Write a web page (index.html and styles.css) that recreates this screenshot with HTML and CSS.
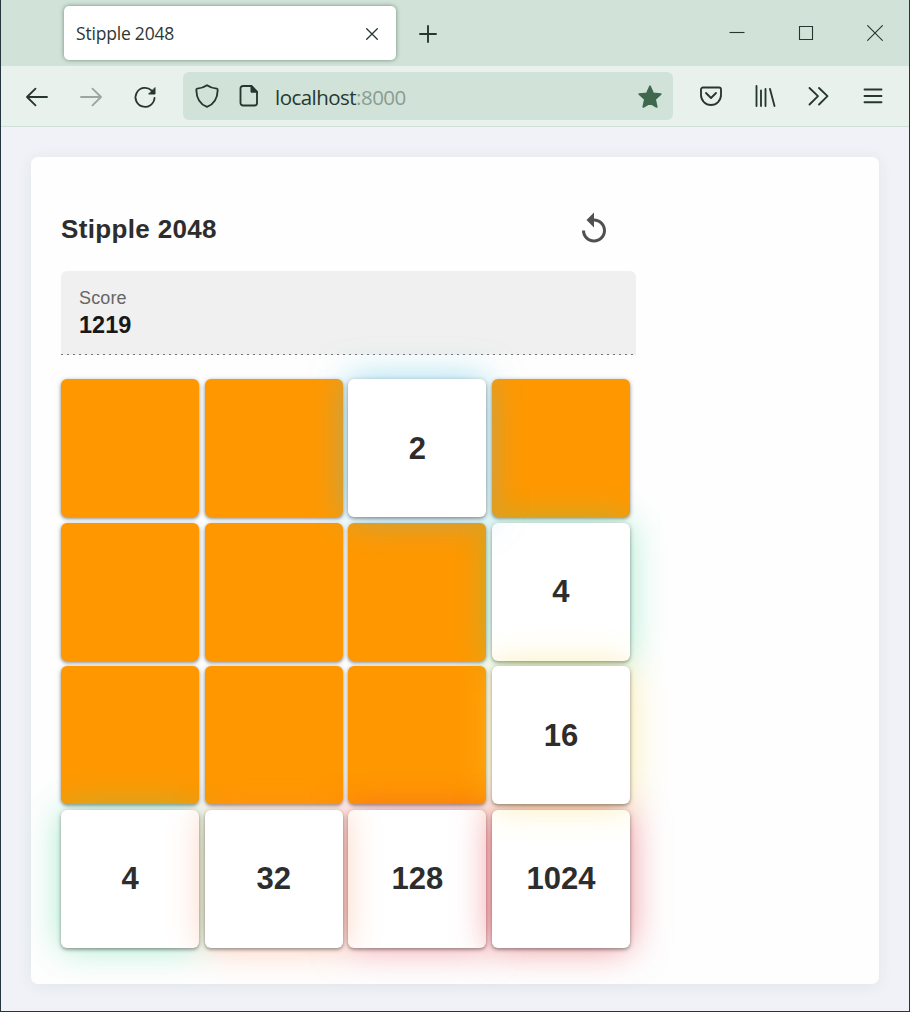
FILE: index.html
```html
<!DOCTYPE html>
<html lang="en">
<head>
<meta charset="utf-8">
<title>Stipple 2048</title>
<link rel="stylesheet" href="styles.css">
</head>
<body>
<div class="window">
  <header class="tabbar">
    <div class="tab">
      <span class="tab-title">Stipple 2048</span>
      <svg class="tab-close" width="12" height="12" viewBox="0 0 12 12"><path d="M.7.7l10.6 10.6M11.3.7L.7 11.3"/></svg>
    </div>
    <svg class="new-tab" width="18" height="18" viewBox="0 0 18 18"><path d="M9 .3v17.4M.3 9h17.4"/></svg>
    <div class="window-controls">
      <svg width="16" height="16" viewBox="0 0 16 16"><path d="M.5 7.5h15"/></svg>
      <svg width="16" height="16" viewBox="0 0 16 16"><path d="M1.5 1.5h13v13h-13z"/></svg>
      <svg width="16" height="16" viewBox="0 0 16 16"><path d="M.3.3l15.4 15.4M15.7.3L.3 15.7"/></svg>
    </div>
  </header>
  <nav class="toolbar">
    <div class="nav-buttons">
      <svg width="24" height="24" viewBox="0 0 24 24"><path d="M22 12H2M10.500 3.700L2 12l8.500 8.300"/></svg>
      <svg class="disabled" width="24" height="24" viewBox="0 0 24 24"><path d="M2 12H22M13.500 3.700L22 12l-8.500 8.300"/></svg>
      <svg width="24" height="24" viewBox="0 0 24 24"><path d="M21.500 13a9.500 9.500 0 1 1-3-7.600L20 7"/><path class="solid" d="M22 3v6h-6z"/></svg>
    </div>
    <div class="urlbar">
      <svg width="24" height="24" viewBox="0 0 24 24"><path d="M12 1.200C9.500 3 6 4.200 2.200 4.700c-.7.100-.9.500-.9 1.200C1.500 14 4.500 20 12 22.800 19.500 20 22.500 14 22.700 5.900c0-.7-.2-1.100-.9-1.200C18 4.200 14.500 3 12 1.200z"/></svg>
      <svg class="page-icon" width="20" height="24" viewBox="0 0 20 24"><path d="M12.500 2H4a2.500 2.500 0 0 0-2.500 2.500v14.500A2.500 2.500 0 0 0 4 21.500h11.500A2.500 2.500 0 0 0 18 19V7.700z"/><path class="solid" d="M12 2v6.200h6z"/></svg>
      <span class="url">localhost<span class="port">:8000</span></span>
      <svg class="star" width="24" height="24" viewBox="0 0 24 24"><path d="M12 1.300l3.100 7 7.600.8-5.700 5.100 1.700 7.700L12 18l-6.700 3.900L7 14.200 1.300 9.100l7.600-.8z"/></svg>
    </div>
    <div class="actions">
      <svg width="24" height="24" viewBox="0 0 24 24"><path d="M4 3.500h16a2 2 0 0 1 2 2V11a10 10 0 0 1-20 0V5.500a2 2 0 0 1 2-2z"/><path d="M7 9l5 5 5-5"/></svg>
      <svg width="24" height="24" viewBox="0 0 24 24"><path d="M3.500 2V22M8 6.500v15.500M12.500 5V22M17 5l4.500 17"/></svg>
      <svg width="24" height="24" viewBox="0 0 24 24"><path d="M2.500 4l8.500 8.200L2.500 20.500M12 4l8.500 8.200-8.500 8.300"/></svg>
      <svg width="24" height="24" viewBox="0 0 24 24"><path d="M3.500 5.500h17M3.500 12h17M3.500 18.200h17"/></svg>
    </div>
  </nav>
  <main class="page">
    <section class="card">
      <div class="heading">
        <h1>Stipple 2048</h1>
        <svg class="restart" width="36" height="36" viewBox="0 0 24 24"><path d="M12 5V1L7 6l5 5V7c3.310 0 6 2.690 6 6s-2.690 6-6 6-6-2.690-6-6H4c0 4.420 3.580 8 8 8s8-3.580 8-8-3.580-8-8-8z"/></svg>
      </div>
      <div class="score">
        <div class="score-label">Score</div>
        <div class="score-value">1219</div>
        <svg class="score-line" width="575" height="1"><path d="M0 .5h575"/></svg>
      </div>
      <div class="board">
        <div class="tile"></div><div class="tile"></div><div class="tile filled v2">2</div><div class="tile"></div>
        <div class="tile"></div><div class="tile"></div><div class="tile"></div><div class="tile filled v4">4</div>
        <div class="tile"></div><div class="tile"></div><div class="tile"></div><div class="tile filled v16">16</div>
        <div class="tile filled v4">4</div><div class="tile filled v32">32</div><div class="tile filled v128">128</div><div class="tile filled v1024">1024</div>
      </div>
    </section>
  </main>
</div>
</body>
</html>
```
FILE: styles.css
```css
* { box-sizing: border-box; }
body { margin: 0; font-family: "Liberation Sans", Arial, sans-serif; color: #2d2d2d; }
.window {
  width: 910px; height: 1012px; overflow: hidden;
  display: flex; flex-direction: column;
  border: solid #26363d; border-width: 0 1px 1px;
  background: #f0f2f7;
}
svg { display: block; flex: none; fill: none; stroke: #26372f; stroke-width: 1.850; stroke-linecap: round; stroke-linejoin: round; }
.solid { fill: #26372f; stroke-width: 1; }
.tabbar { height: 66px; flex: none; background: #d1e3d8; display: flex; align-items: center; padding-left: 63px; }
.tab {
  width: 332px; height: 54px; border-radius: 5px; background: #fff;
  box-shadow: 0 0 4px rgba(30, 60, 45, .55);
  display: flex; align-items: center; justify-content: space-between;
  padding: 0 18px 0 12px;
}
.tab-title { font: 17.500px/24px "Open Sans", "Noto Sans", sans-serif; letter-spacing: -.2px; color: #2d3833; }
.tab-close { stroke-width: 1.300; margin-top: 1px; }
.new-tab { margin: 2px 0 0 23px; stroke-width: 1.900; stroke-linecap: butt; }
.window-controls { margin-left: auto; display: flex; gap: 53px; padding-right: 26px; }
.window-controls svg { stroke-width: 1.100; stroke-linecap: butt; stroke-linejoin: miter; }
.toolbar { height: 61px; flex: none; background: #e8f1ec; border-bottom: 1px solid #d1e0d7; display: flex; align-items: center; padding-left: 24px; }
.nav-buttons { display: flex; gap: 30px; width: 158px; }
.nav-buttons svg { margin-top: 2px; }
.nav-buttons .disabled { stroke: #9aa69f; }
.urlbar { width: 490px; height: 48px; border-radius: 6px; background: #d1e3d8; display: flex; align-items: center; padding: 0 11px 0 12px; }
.page-icon { margin-left: 20px; }
.url { margin-left: 16px; padding-top: 2px; font: 20.500px/28px "Open Sans", "Noto Sans", sans-serif; letter-spacing: -.530px; color: #27382f; }
.port { color: #8b9c93; }
.star { margin-left: auto; margin-top: 2px; fill: #40684f; stroke: #40684f; }
.actions { display: flex; gap: 30px; padding-left: 26px; }
.page { flex: 1; padding: 30px; }
.card { width: 848px; height: 827px; padding: 53px 30px 0; border-radius: 7px; background: #fefefe; box-shadow: 0 2px 16px rgba(35, 50, 60, .07); }
.heading { width: 575px; height: 38px; display: flex; align-items: center; justify-content: space-between; padding-right: 24px; }
h1 { margin: 0; font-size: 26px; line-height: 38px; letter-spacing: .35px; }
.restart { fill: #505050; stroke: none; }
.score { width: 575px; height: 84px; margin-top: 23px; padding: 16px 18px 0; border-radius: 6px 6px 0 0; background: #f0f0f0; display: flex; flex-direction: column; }
.score-label { font-size: 18px; line-height: 22px; letter-spacing: .15px; color: #666; }
.score-value { font-size: 23.500px; line-height: 32px; font-weight: bold; color: #181818; }
.score-line { margin: 13px 0 0 -18px; stroke: #777; stroke-width: 1; stroke-linecap: butt; stroke-dasharray: 2 4; }
.board { margin-top: 24px; width: 569px; display: grid; grid-template-columns: repeat(4, 138px); grid-auto-rows: 138px; gap: 5.670px; }
.tile {
  border-radius: 6px; background: #ff9800; position: relative;
  display: flex; align-items: center; justify-content: center; padding-top: 1px;
  font-size: 31px; font-weight: bold;
  box-shadow: 0 1px 5px rgba(0, 0, 0, .28), 0 2px 3px rgba(0, 0, 0, .25);
}
.filled { background: #fff; box-shadow: 0 1px 5px rgba(0, 0, 0, .25), 0 2px 3px rgba(0, 0, 0, .2), 0 0 36px var(--glow); }
.v2 { --glow: rgba(75, 190, 225, .55); z-index: 3; }
.v4 { --glow: rgba(70, 216, 155, .48); z-index: 1; }
.v16 { --glow: rgba(247, 211, 65, .46); z-index: 3; }
.v32 { --glow: rgba(250, 130, 75, .42); z-index: 2; }
.v128 { --glow: rgba(235, 62, 75, .5); z-index: 1; }
.v1024 { --glow: rgba(228, 45, 55, .52); z-index: 2; }
```
